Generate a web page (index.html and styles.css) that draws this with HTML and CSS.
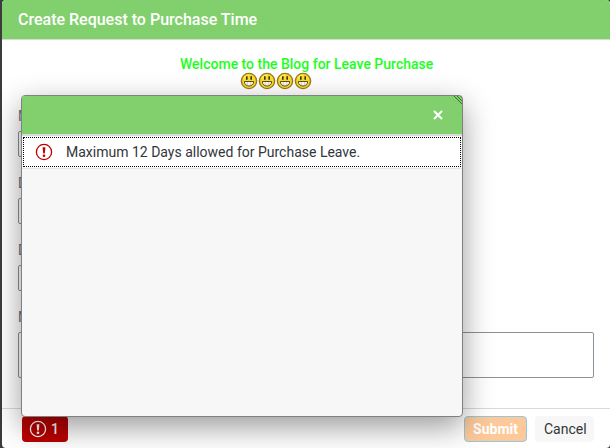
FILE: index.html
```
<!DOCTYPE html>
<html lang="en">
<head>
  <meta charset="UTF-8">
  <meta name="viewport" content="width=device-width, initial-scale=1.0">
  <link rel="stylesheet" href="styles.css">
  <title>Create Request to Purchase Time</title>
</head>
<body>
  <svg class="defs" width="0" height="0" aria-hidden="true">
    <symbol id="smiley" viewBox="0 0 18 18">
      <circle cx="9" cy="9" r="7.6" fill="#f5e02c" stroke="#a07818" stroke-width="1.4"/>
      <path d="M4 6.5Q5.5 3 9 3" fill="none" stroke="#fff68a" stroke-width="1.2"/>
      <path d="M6.8 4.2v3.6M11.2 4.2v3.6" stroke="#4a3210" stroke-width="1.6"/>
      <path d="M4.300 9.500h9.400c0 2.800-2 4.500-4.700 4.500s-4.700-1.700-4.700-4.500z" fill="#fff" stroke="#6b4a18" stroke-width="1"/>
      <path d="M7.300 10v3.500M10.700 10v3.500" stroke="#b9a078" stroke-width=".5"/>
    </symbol>
    <symbol id="error" viewBox="0 0 18 18">
      <circle cx="9" cy="9" r="7.6" fill="none" stroke="currentColor" stroke-width="1.3"/>
      <path d="M7.600 4.200h2.800l-.6 6.200H8.200z" fill="currentColor"/>
      <circle cx="9" cy="12.700" r="1.3" fill="currentColor"/>
    </symbol>
  </svg>

  <div class="dialog">
    <header class="dialog-header">
      <h1>Create Request to Purchase Time</h1>
    </header>

    <main class="dialog-content">
      <div class="welcome">
        <p>Welcome to the Blog for Leave Purchase</p>
        <div class="smileys">
          <svg><use href="#smiley"/></svg>
          <svg><use href="#smiley"/></svg>
          <svg><use href="#smiley"/></svg>
          <svg><use href="#smiley"/></svg>
        </div>
      </div>

      <form class="form" id="request">
        <div class="field">
          <label for="max">Max</label>
          <input type="text" id="max">
        </div>
        <div class="field">
          <label for="days">Days</label>
          <input type="text" id="days">
        </div>
        <div class="field">
          <label for="date">Date</label>
          <input type="text" id="date">
        </div>
        <div class="field">
          <label for="message">Message</label>
          <textarea id="message"></textarea>
        </div>
      </form>
    </main>

    <footer class="dialog-footer">
      <button type="button" class="btn btn-messages">
        <svg><use href="#error"/></svg>1
      </button>
      <button type="submit" form="request" class="btn btn-submit">Submit</button>
      <button type="button" class="btn btn-cancel">Cancel</button>
    </footer>
  </div>

  <section class="popover" aria-label="Messages">
    <div class="popover-header">
      <button type="button" class="close" aria-label="Close">
        <svg viewBox="0 0 10 10"><path d="M1 1l8 8M9 1l-8 8"/></svg>
      </button>
      <svg class="resize" viewBox="0 0 8 8"><path d="M0 0l8 8M3 0l5 5M6 0l2 2"/></svg>
    </div>
    <ul class="message-list">
      <li class="message" tabindex="0">
        <svg><use href="#error"/></svg>
        <span>Maximum 12 Days allowed for Purchase Leave.</span>
      </li>
    </ul>
  </section>
</body>
</html>
```

FILE: styles.css
```
* {
  box-sizing: border-box;
}

body {
  margin: 0;
  background-color: #3c3c3f;
  font-family: Roboto, "Liberation Sans", sans-serif;
  font-size: 14px;
  color: #32363a;
}

.defs {
  position: absolute;
}

.dialog {
  display: flex;
  flex-direction: column;
  min-height: 100vh;
  margin-left: 2px;
  background-color: #fff;
  border-radius: 4px;
  overflow: hidden;
}

.dialog-header {
  padding: 0 16px;
  background-color: #81d06d;
  border-bottom: 1px solid #d9d9d9;
}

.dialog-header h1 {
  margin: 0;
  font-size: 16px;
  font-weight: 500;
  line-height: 39px;
  color: #fff;
}

.dialog-content {
  flex: 1;
  padding: 16px 16px 0;
}

.welcome {
  width: 252px;
  margin: 0 auto;
  font-weight: 500;
  color: #1bff1b;
}

.welcome p {
  margin: 0;
  line-height: 16px;
  text-align: center;
  white-space: nowrap;
}

.smileys {
  display: flex;
  padding-left: 60px;
}

.smileys svg {
  width: 18px;
  height: 18px;
}

.form {
  display: flex;
  flex-direction: column;
  gap: 16px;
  padding-top: 16px;
}

.field {
  display: flex;
  flex-direction: column;
  align-items: flex-start;
  gap: 4px;
}

.field label {
  line-height: 21px;
  color: #6a6d70;
}

.field input,
.field textarea {
  width: 50%;
  height: 26px;
  padding: 0 8px;
  border: 1px solid #89919a;
  border-radius: 2px;
  background-color: #fff;
  font: inherit;
}

.field textarea {
  width: 100%;
  height: 46px;
  resize: none;
}

.dialog-footer {
  display: flex;
  gap: 8px;
  padding: 7px 16px 6px 20px;
  border-top: 1px solid #d9d9d9;
}

.btn {
  height: 26px;
  padding: 0 8px;
  border: 1px solid transparent;
  border-radius: 4px;
  font: inherit;
  color: #32363a;
}

.btn-messages {
  display: flex;
  align-items: center;
  gap: 4px;
  width: 46px;
  margin-right: auto;
  padding: 0 6px;
  background-color: #b00;
  font-weight: 500;
  color: #fff;
}

.btn-messages svg {
  width: 18px;
  height: 18px;
}

.btn-submit {
  width: 63px;
  padding: 0;
  background-color: #fdc999;
  border-color: #91c8e6;
  font-weight: 700;
  color: #fff;
}

.btn-cancel {
  width: 59px;
  background-color: #f7f7f7;
}

/* message popover, opened over the form */
.popover {
  position: absolute;
  top: 95px;
  right: 147px;
  bottom: 31px;
  left: 21px;
  border: 1px solid #808080;
  border-radius: 4px;
  background-color: #f7f7f7;
  box-shadow: 0 10px 30px rgba(0, 0, 0, 0.4);
  overflow: hidden;
}

.popover-header {
  display: flex;
  align-items: center;
  justify-content: flex-end;
  height: 40px;
  padding-right: 15px;
  background-color: #81d06d;
  border-bottom: 2px solid #d9d9d9;
}

.close {
  display: flex;
  padding: 4px;
  border: 0;
  background: none;
}

.close svg {
  width: 10px;
  height: 10px;
  fill: none;
  stroke: #fff;
  stroke-width: 2;
}

.resize {
  position: absolute;
  top: 0;
  right: 0;
  width: 8px;
  height: 8px;
  stroke: #3c6b38;
}

.message-list {
  margin: 0;
  padding: 1px;
  border-bottom: 1px solid #e5e5e5;
  list-style: none;
}

.message {
  display: flex;
  align-items: center;
  gap: 13px;
  height: 30px;
  padding-left: 11px;
  border: 1px dotted #000;
  background-color: #fff;
  outline: none;
}

.message svg {
  width: 18px;
  height: 18px;
  color: #b00;
}
```
